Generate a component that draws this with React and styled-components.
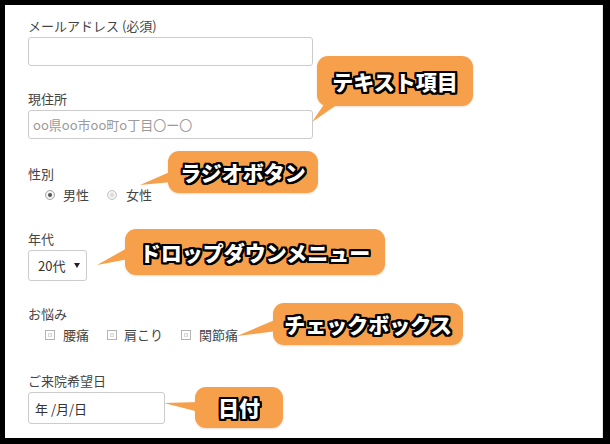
import React from "react";
import styled, { createGlobalStyle } from "styled-components";

const ORANGE = "#f6a04b";

const GlobalStyle = createGlobalStyle`
  html, body { margin: 0; padding: 0; background: #000; }
  body { font-family: "Noto Sans CJK JP", "Noto Sans", sans-serif; }
`;

const Frame = styled.div`
  width: 610px;
  height: 444px;
  box-sizing: border-box;
  background: #000;
  padding: 5px 7px 6px 5px;
`;

const Panel = styled.div`
  position: relative;
  height: 100%;
  box-sizing: border-box;
  background: #fff;
  border-right: 1px solid #e4e4e4;
  padding: 12px 0 0 23px;
`;

const Field = styled.div`
  position: relative;
  margin-top: ${(p) => p.$mt || 0}px;
`;

const Label = styled.div`
  font-size: 13px;
  line-height: 18px;
  color: #444;
  margin-bottom: 2px;
`;

const TextInput = styled.input`
  display: block;
  width: 285px;
  height: 29px;
  box-sizing: border-box;
  margin: 0;
  border: 1px solid #ccc;
  border-radius: 3px;
  padding: 0 4px;
  font-family: "Noto Sans CJK JP", "Noto Sans", sans-serif;
  font-size: 13px;
  color: #333;
  background: #fff;
  outline: none;
  &::placeholder { color: #9a9a9a; }
`;

const Options = styled.div`
  display: flex;
  align-items: center;
  height: 20px;
  padding-left: 17px;
  gap: 18px;
`;

const Option = styled.label`
  display: flex;
  align-items: center;
  gap: ${(p) => p.$gap || 8}px;
  font-size: 13px;
  color: #444;
  line-height: 20px;
`;

const Radio = styled.span`
  position: relative;
  width: 10px;
  height: 10px;
  box-sizing: border-box;
  border-radius: 50%;
  border: 1px solid ${(p) => (p.$checked ? "#a8a8a8" : "#c4c4c4")};
  background: #f2f2f2;
  &::after {
    content: "";
    position: absolute;
    left: 2px;
    top: 2px;
    width: 4px;
    height: 4px;
    border-radius: 50%;
    background: ${(p) => (p.$checked ? "#555" : "#dcdcdc")};
  }
`;

const Check = styled.span`
  width: 10px;
  height: 10px;
  box-sizing: border-box;
  border: 1px solid #b4b4b4;
  background: #f4f4f4;
  box-shadow: inset 0 0 0 2px #fff, inset 0 0 0 3px #dadada;
`;

const SelectBox = styled.div`
  display: flex;
  align-items: center;
  width: 59px;
  height: 31px;
  box-sizing: border-box;
  border: 1px solid #ccc;
  border-radius: 3px;
  padding-left: 9px;
  gap: 9px;
  font-size: 13px;
  color: #333;
`;

const Caret = styled.span`
  width: 0;
  height: 0;
  border-left: 3px solid transparent;
  border-right: 3px solid transparent;
  border-top: 5px solid #222;
`;

const DateBox = styled.div`
  display: flex;
  align-items: center;
  width: 137px;
  height: 32px;
  box-sizing: border-box;
  border: 1px solid #ccc;
  border-radius: 3px;
  padding-left: 6px;
  font-size: 13px;
  color: #333;
  white-space: pre;
`;

const Callout = styled.div`
  position: absolute;
  left: ${(p) => p.$x}px;
  top: ${(p) => p.$y}px;
  width: ${(p) => p.$w}px;
  height: ${(p) => p.$h}px;
  box-sizing: border-box;
  display: flex;
  align-items: center;
  justify-content: center;
  background: ${ORANGE};
  border-radius: 11px;
  box-shadow: 0 1px 2px rgba(120, 70, 0, 0.18);
  font-size: 21px;
  font-weight: 900;
  line-height: 1;
  color: #fff;
  white-space: nowrap;
  text-shadow:
    -2px -2px 0 #000, 2px -2px 0 #000, -2px 2px 0 #000, 2px 2px 0 #000,
    0 -2px 0 #000, 0 2px 0 #000, -2px 0 0 #000, 2px 0 0 #000,
    -1px -2px 0 #000, 1px -2px 0 #000, -1px 2px 0 #000, 1px 2px 0 #000,
    -2px -1px 0 #000, 2px -1px 0 #000, -2px 1px 0 #000, 2px 1px 0 #000;
`;

const Tail = styled.svg`
  position: absolute;
  left: 0;
  top: 0;
  width: 1px;
  height: 1px;
  overflow: visible;
`;

function Note({ x, y, w, h, tail, children }) {
  return (
    <Callout $x={x} $y={y} $w={w} $h={h}>
      <Tail>
        <polygon points={tail} fill={ORANGE} />
      </Tail>
      {children}
    </Callout>
  );
}

export default function App() {
  return (
    <>
      <GlobalStyle />
      <Frame>
        <Panel>
          <Field>
            <Label>メールアドレス (必須)</Label>
            <TextInput type="text" />
          </Field>

          <Field $mt={24}>
            <Label>現住所</Label>
            <TextInput type="text" placeholder="oo県oo市oo町o丁目〇ー〇" />
            <Note x={289} y={-34} w={156} h={50} tail="-5,66 10,44 24,46">
              テキスト項目
            </Note>
          </Field>

          <Field $mt={26}>
            <Label>性別</Label>
            <Options>
              <Option>
                <Radio $checked />
                男性
              </Option>
              <Option $gap={9}>
                <Radio />
                女性
              </Option>
            </Options>
            <Note x={140} y={-14} w={150} h={42} tail="-28,34 4,20 4,31">
              ラジオボタン
            </Note>
          </Field>

          <Field $mt={25}>
            <Label>年代</Label>
            <SelectBox>
              20代
              <Caret />
            </SelectBox>
            <Note x={97} y={-1} w={260} h={46} tail="-28,36 4,18 4,30">
              ドロップダウンメニュー
            </Note>
          </Field>

          <Field $mt={24}>
            <Label>お悩み</Label>
            <Options>
              <Option>
                <Check />
                腰痛
              </Option>
              <Option $gap={7}>
                <Check />
                肩こり
              </Option>
              <Option>
                <Check />
                関節痛
              </Option>
            </Options>
            <Note x={245} y={-2} w={190} h={42} tail="-36,33 4,16 4,28">
              チェックボックス
            </Note>
          </Field>

          <Field $mt={27}>
            <Label>ご来院希望日</Label>
            <DateBox>{"年 /月/日"}</DateBox>
            <Note x={167} y={15} w={88} h={41} tail="-31,16 4,15 4,25">
              日付
            </Note>
          </Field>
        </Panel>
      </Frame>
    </>
  );
}
